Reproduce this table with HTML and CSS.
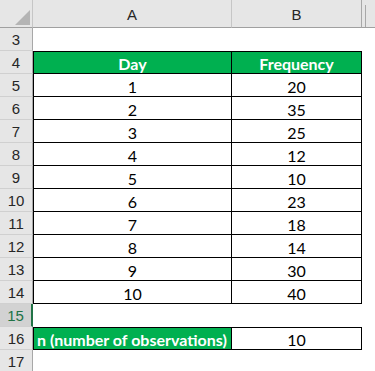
FILE: index.html
```html
<!DOCTYPE html>
<html>
<head>
<meta charset="utf-8">
<link rel="stylesheet" href="styles.css">
</head>
<body>
<div class="sheet">
  <div class="corner"><span class="tri"></span></div>
  <div class="colhead">A</div>
  <div class="colhead">B</div>
  <div class="colhead rest"><span class="thin"></span></div>

  <div class="rowhead">3</div>
  <div class="cell"></div><div class="cell"></div><div class="cell"></div>

  <div class="rowhead">4</div>
  <div class="cell t th first top">Day</div>
  <div class="cell t th top">Frequency</div>
  <div class="cell"></div>

  <div class="rowhead">5</div><div class="cell t first">1</div><div class="cell t">20</div><div class="cell"></div>
  <div class="rowhead">6</div><div class="cell t first">2</div><div class="cell t">35</div><div class="cell"></div>
  <div class="rowhead">7</div><div class="cell t first">3</div><div class="cell t">25</div><div class="cell"></div>
  <div class="rowhead">8</div><div class="cell t first">4</div><div class="cell t">12</div><div class="cell"></div>
  <div class="rowhead">9</div><div class="cell t first">5</div><div class="cell t">10</div><div class="cell"></div>
  <div class="rowhead">10</div><div class="cell t first">6</div><div class="cell t">23</div><div class="cell"></div>
  <div class="rowhead">11</div><div class="cell t first">7</div><div class="cell t">18</div><div class="cell"></div>
  <div class="rowhead">12</div><div class="cell t first">8</div><div class="cell t">14</div><div class="cell"></div>
  <div class="rowhead">13</div><div class="cell t first">9</div><div class="cell t">30</div><div class="cell"></div>
  <div class="rowhead">14</div><div class="cell t first">10</div><div class="cell t">40</div><div class="cell"></div>

  <div class="rowhead sel">15</div>
  <div class="cell"></div><div class="cell"></div><div class="cell"></div>

  <div class="rowhead">16</div>
  <div class="cell t th first top left">n (number of observations)</div>
  <div class="cell t top">10</div>
  <div class="cell"></div>

  <div class="rowhead">17</div>
  <div class="cell"></div><div class="cell"></div><div class="cell"></div>
</div>
</body>
</html>
```
FILE: styles.css
```css
* { box-sizing: border-box; }
html, body { margin: 0; padding: 0; background: #fff; }
body { font-family: Lato, "Open Sans", sans-serif; font-size: 16px; color: #000; }

.sheet {
  display: grid;
  grid-template-columns: 33px 199px 130px 13px;
  grid-template-rows: 28px repeat(15, 23px);
  width: 375px;
  height: 371px;
  overflow: hidden;
}

.corner {
  position: relative;
  background: #e6e6e6;
  border-right: 1px solid #c6c6c6;
  border-bottom: 1px solid #a0a0a0;
}
.tri {
  position: absolute;
  left: 15px;
  top: 10px;
  width: 0;
  height: 0;
  border-left: 15px solid transparent;
  border-bottom: 15px solid #b4b4b4;
}

.colhead {
  background: #e6e6e6;
  border-right: 1px solid #c6c6c6;
  border-bottom: 1px solid #a0a0a0;
  display: flex;
  align-items: center;
  justify-content: center;
  padding-top: 2px;
  color: #262626;
  font-family: "Liberation Sans", Arial, sans-serif;
  font-size: 15px;
}
.colhead.rest {
  position: relative;
  border-right: none;
  border-left: 1px solid #a8a8a8;
  margin-left: -1px;
}
.thin {
  position: absolute;
  left: 3px;
  top: 5px;
  bottom: 0;
  width: 1px;
  background: #a8a8a8;
}

.rowhead {
  background: #e6e6e6;
  border-right: 1px solid #a8a8a8;
  border-bottom: 1px solid #d0d0d0;
  display: flex;
  align-items: center;
  justify-content: center;
  padding-top: 1px;
  color: #262626;
  font-family: "Liberation Sans", Arial, sans-serif;
  font-size: 15px;
}
.rowhead.sel {
  background: #d2d2d2;
  border-right: 2px solid #217346;
  color: #217346;
}

.cell { background: #fff; }
.t {
  display: flex;
  align-items: center;
  justify-content: center;
  padding-top: 2px;
  border-right: 1px solid #000;
  border-bottom: 1px solid #000;
}
.first { border-left: 1px solid #000; }
.top { border-top: 1px solid #000; }
.th {
  background: #00b050;
  color: #fff;
  font-weight: bold;
}
.left {
  justify-content: flex-start;
  padding-left: 3px;
  white-space: nowrap;
}
```
